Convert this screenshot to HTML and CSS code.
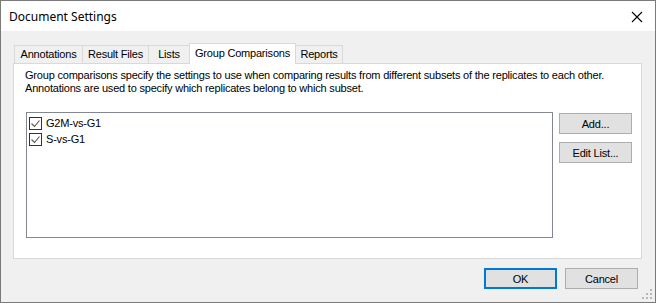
FILE: index.html
```html
<!DOCTYPE html>
<html lang="en">
<head>
    <meta charset="UTF-8">
    <title>Document Settings</title>
    <link rel="stylesheet" href="styles.css">
</head>
<body>
  <div class="window">
    <!-- Title bar -->
    <div class="titlebar">
      <span class="title">Document Settings</span>
      <svg class="close" width="12" height="12" viewBox="0 0 12 12">
        <path d="M1 1 L11 11 M11 1 L1 11" stroke="#000" stroke-width="1.1" fill="none"/>
      </svg>
    </div>

    <div class="dialog">
      <div class="tabs">
        <div class="tab tab-annotations">Annotations</div>
        <div class="tab tab-results">Result Files</div>
        <div class="tab tab-lists">Lists</div>
        <div class="tab tab-groups selected">Group Comparisons</div>
        <div class="tab tab-reports">Reports</div>
      </div>

      <div class="page">
        <p class="desc">Group comparisons specify the settings to use when comparing results from different subsets of the replicates to each other.<br>Annotations are used to specify which replicates belong to which subset.</p>

        <div class="list-row">
          <div class="listbox">
            <div class="item"><span class="check"><svg width="11" height="11" viewBox="0 0 11 11"><path d="M1.5 5.5 L4.5 8.5 L9.5 2.5" stroke="#555" stroke-width="1.1" fill="none"/></svg></span>G2M-vs-G1</div>
            <div class="item"><span class="check"><svg width="11" height="11" viewBox="0 0 11 11"><path d="M1.5 5.5 L4.5 8.5 L9.5 2.5" stroke="#555" stroke-width="1.1" fill="none"/></svg></span>S-vs-G1</div>
          </div>
          <div class="side-buttons">
            <button class="btn">Add...</button>
            <button class="btn">Edit List...</button>
          </div>
        </div>
      </div>

      <div class="footer">
        <button class="btn btn-default">OK</button>
        <button class="btn">Cancel</button>
      </div>
    </div>

    <svg class="grip" width="11" height="11" viewBox="0 0 11 11">
      <rect x="8" y="0" width="2" height="2" fill="#b8b8b8"/>
      <rect x="4" y="4" width="2" height="2" fill="#b8b8b8"/>
      <rect x="8" y="4" width="2" height="2" fill="#b8b8b8"/>
      <rect x="0" y="8" width="2" height="2" fill="#b8b8b8"/>
      <rect x="4" y="8" width="2" height="2" fill="#b8b8b8"/>
      <rect x="8" y="8" width="2" height="2" fill="#b8b8b8"/>
    </svg>
  </div>
</body>
</html>
```

FILE: styles.css
```css
body {
    margin: 0;
    font-family: "Liberation Sans", Arial, sans-serif;
    font-size: 11px;
    letter-spacing: -0.2px;
    color: #000;
    background-color: #f0f0f0;
}
.window {
    position: relative;
    width: 654px;
    height: 301px;
    border: 1px solid #7a7a7a;
    background-color: #f0f0f0;
    display: flex;
    flex-direction: column;
}
.titlebar {
    height: 30px;
    background-color: #fff;
    display: flex;
    align-items: center;
    justify-content: space-between;
    padding: 0 12px 0 8px;
}
.title {
    font-family: "Noto Sans", sans-serif;
    font-size: 12px;
    letter-spacing: 0;
    padding-top: 1px;
}
.close {
    margin-top: 1px;
}
.dialog {
    padding: 12px 17px 0 12px;
}
.tabs {
    display: flex;
    align-items: flex-end;
    height: 20px;
    padding-left: 1px;
}
.tab {
    flex-shrink: 0;
    box-sizing: border-box;
    height: 18px;
    line-height: 17px;
    text-align: center;
    white-space: nowrap;
    border: 1px solid #d9d9d9;
    border-bottom: none;
    border-right: none;
    background-color: #f0f0f0;
}
.tab-annotations { width: 68px; }
.tab-results { width: 66px; }
.tab-lists { width: 41px; }
.tab-groups { width: 107px; }
.tab-reports { width: 47px; border-right: 1px solid #d9d9d9; }
.tab.selected {
    height: 21px;
    line-height: 18px;
    background-color: #fff;
    border-right: 1px solid #d9d9d9;
    margin-bottom: -1px;
    position: relative;
    z-index: 1;
}
.tab.selected + .tab {
    border-left: none;
}
.page {
    width: 627px;
    height: 194px;
    border: 1px solid #d9d9d9;
    background-color: #fff;
}
.desc {
    margin: 5px 0 0 11px;
    line-height: 13px;
}
.list-row {
    display: flex;
    margin: 17px 0 0 12px;
    gap: 6px;
}
.listbox {
    width: 525px;
    height: 122px;
    border: 1px solid #828790;
    padding-top: 2px;
}
.item {
    height: 16px;
    display: flex;
    align-items: center;
    padding-left: 2px;
}
.check {
    width: 11px;
    height: 11px;
    border: 1px solid #333;
    margin-right: 4px;
    display: flex;
}
.side-buttons {
    display: flex;
    flex-direction: column;
    gap: 8px;
    padding-top: 1px;
}
.btn {
    width: 73px;
    height: 21px;
    padding: 0;
    font-family: "Liberation Sans", Arial, sans-serif;
    font-size: 11px;
    letter-spacing: -0.2px;
    color: #000;
    background-color: #e1e1e1;
    border: 1px solid #adadad;
}
.footer {
    display: flex;
    justify-content: flex-end;
    gap: 8px;
    margin-top: 9px;
}
.btn-default {
    border: 2px solid #0078d7;
}
.grip {
    position: absolute;
    right: 2px;
    bottom: 2px;
}
```
